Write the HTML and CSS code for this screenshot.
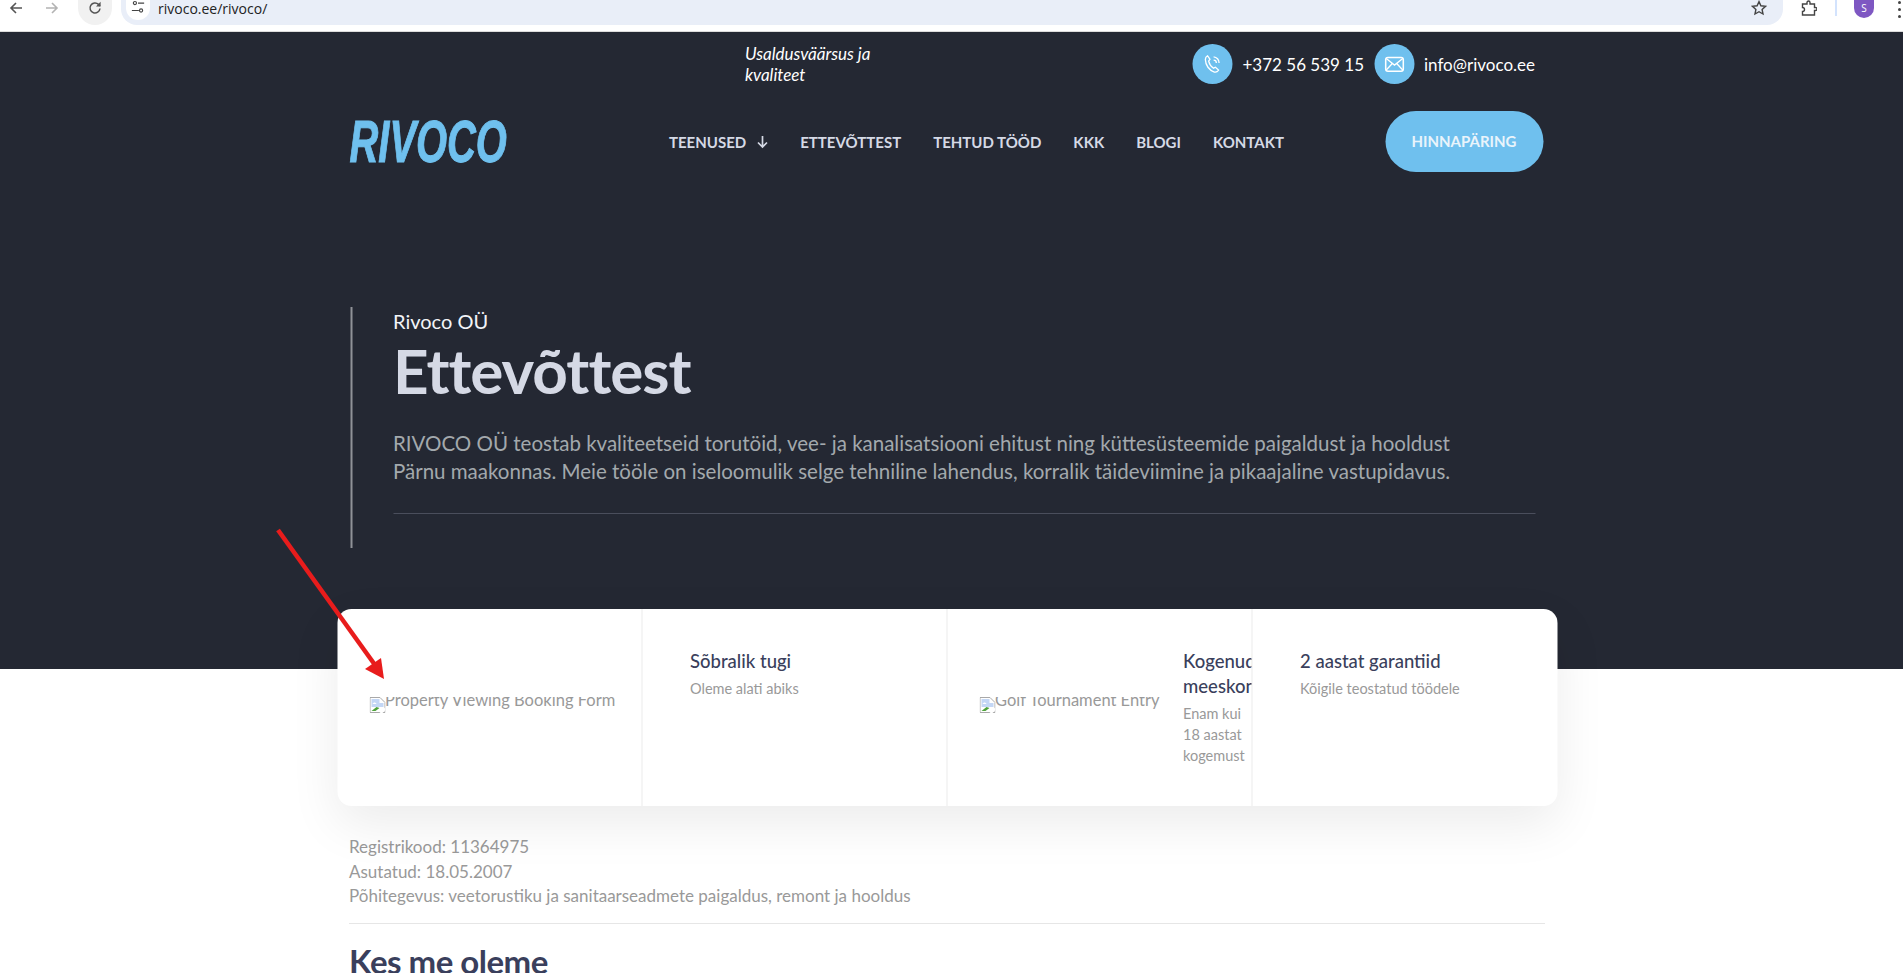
FILE: index.html
```html
<!DOCTYPE html>
<html lang="en">
<head>
    <meta charset="UTF-8">
    <meta name="viewport" content="width=device-width, initial-scale=1.0">
    <title>Ettevõttest - Rivoco</title>
    <link rel="stylesheet" href="styles.css">
</head>
<body>
    <!-- browser toolbar -->
    <div class="toolbar">
        <svg class="tool-icon back" viewBox="0 0 16 16"><path d="M14 8H3M8 3L3 8l5 5" fill="none" stroke="#555" stroke-width="1.6"/></svg>
        <svg class="tool-icon forward" viewBox="0 0 16 16"><path d="M2 8h11M8 3l5 5-5 5" fill="none" stroke="#b3b3b3" stroke-width="1.6"/></svg>
        <div class="reload">
            <svg viewBox="0 0 16 16"><path d="M13 8.5A5 5 0 1 1 11.5 4.4L13 6" fill="none" stroke="#555" stroke-width="1.5"/><path d="M13.6 1.8v4.6H9z" fill="#555"/></svg>
        </div>
        <div class="address">
            <div class="chip">
                <svg viewBox="0 0 16 16"><g fill="none" stroke="#444" stroke-width="1.3"><circle cx="4.5" cy="3.5" r="1.8"/><circle cx="11.5" cy="12" r="1.8"/><path d="M8 3.5h7M1 12h8"/></g></svg>
            </div>
            <span class="url">rivoco.ee/rivoco/</span>
            <svg class="star" viewBox="0 0 16 16"><path d="M8 1.6l1.9 4.2 4.6.5-3.4 3.1.9 4.6L8 11.7 4 14l.9-4.6L1.5 6.3l4.6-.5z" fill="none" stroke="#444" stroke-width="1.4"/></svg>
        </div>
        <svg class="puzzle" viewBox="0 0 16 16"><path d="M1.5 4H6V2.5a1.5 1.5 0 0 1 3 0V4h4.5v3.5h1a1.5 1.5 0 0 1 0 3h-1V15h-12v-3.5a2 2 0 0 0 0-4z" fill="none" stroke="#444" stroke-width="1.4"/></svg>
        <div class="tool-sep"></div>
        <div class="avatar">S</div>
        <div class="menu-dots"><i></i><i></i><i></i></div>
    </div>

    <section class="hero">
        <div class="wrap">
            <div class="topbar">
                <em class="tagline">Usaldusväärsus ja kvaliteet</em>
                <div class="contact">
                    <span class="round-icon">
                        <svg viewBox="0 0 20 20"><path d="M5.5 2.5l2.2 3.2-1.2 1.6c.6 2.6 2.2 5 4.4 6.5l1.8-.9 2.8 2.6c-1 1.6-2.4 2.2-3.8 1.8C7 15.800 3.600 11 3.500 6c0-1.500.7-2.800 2-3.500zM11 3.500a5.500 5.500 0 0 1 5 5.500M11 6.500a2.500 2.500 0 0 1 2.500 2.500" fill="none" stroke="#fff" stroke-width="1.2"/></svg>
                    </span>
                    <span>+372 56 539 15</span>
                </div>
                <div class="contact">
                    <span class="round-icon">
                        <svg viewBox="0 0 20 20"><rect x="2" y="4" width="16" height="12.500" rx="2" fill="none" stroke="#fff" stroke-width="1.400"/><path d="M2.500 5l7.500 6 7.500-6M2.500 15.500l5.500-6M17.500 15.500l-5.500-6" fill="none" stroke="#fff" stroke-width="1.200"/></svg>
                    </span>
                    <span>info@rivoco.ee</span>
                </div>
            </div>
            <div class="mainbar">
                <a class="logo"><span>RIVOCO</span></a>
                <nav class="nav">
                    <a>TEENUSED
                        <svg viewBox="0 0 12 14"><path d="M6 1v11M1.500 7.500L6 12l4.500-4.500" fill="none" stroke="#d5d9e5" stroke-width="1.700"/></svg>
                    </a>
                    <a>ETTEVÕTTEST</a>
                    <a>TEHTUD TÖÖD</a>
                    <a>KKK</a>
                    <a>BLOGI</a>
                    <a>KONTAKT</a>
                </nav>
                <a class="quote-btn">HINNAPÄRING</a>
            </div>
            <div class="intro">
                <div class="intro-sub">Rivoco OÜ</div>
                <h1>Ettevõttest</h1>
                <p>RIVOCO OÜ teostab kvaliteetseid torutöid, vee- ja kanalisatsiooni ehitust ning küttesüsteemide paigaldust ja hooldust<br>Pärnu maakonnas. Meie tööle on iseloomulik selge tehniline lahendus, korralik täideviimine ja pikaajaline vastupidavus.</p>
                <div class="intro-line"></div>
            </div>
        </div>
    </section>

    <div class="features">
        <div class="feature feature-img">
            <div class="broken">
                <svg viewBox="0 0 16 16"><path d="M.5.500h10l5 5v10H.5z" fill="#fff" stroke="#a9a9a9"/><path d="M2 2h8v4h4v4H2z" fill="#c4d7f5"/><path d="M3 7c1-2 3-2 4 0z" fill="#fff"/><path d="M2 14l5-4 3 1-4 3z" fill="#4ea33a"/><path d="M10 16l6-6v3l-3 3z" fill="#fff"/></svg>
                <span>Property Viewing Booking Form</span>
            </div>
        </div>
        <div class="feature feature-text">
            <h3>Sõbralik tugi</h3>
            <p>Oleme alati abiks</p>
        </div>
        <div class="feature feature-golf">
            <div class="broken golf">
                <svg viewBox="0 0 16 16"><path d="M.5.500h10l5 5v10H.5z" fill="#fff" stroke="#a9a9a9"/><path d="M2 2h8v4h4v4H2z" fill="#c4d7f5"/><path d="M3 7c1-2 3-2 4 0z" fill="#fff"/><path d="M2 14l5-4 3 1-4 3z" fill="#4ea33a"/><path d="M10 16l6-6v3l-3 3z" fill="#fff"/></svg>
                <span>Golf Tournament Entry</span>
            </div>
            <div class="clipped-text">
                <h3>Kogenud meeskond</h3>
                <p>Enam kui 18 aastat kogemust</p>
            </div>
        </div>
        <div class="feature feature-text">
            <h3>2 aastat garantiid</h3>
            <p>Kõigile teostatud töödele</p>
        </div>
    </div>

    <div class="company">
        <p>Registrikood: 11364975</p>
        <p>Asutatud: 18.05.2007</p>
        <p>Põhitegevus: veetorustiku ja sanitaarseadmete paigaldus, remont ja hooldus</p>
        <div class="company-line"></div>
        <h2>Kes me oleme</h2>
    </div>

    <!-- red annotation arrow -->
    <svg class="annotation" viewBox="0 0 120 160"><path d="M2 2L99 137" stroke="#e81c1c" stroke-width="4.500" fill="none"/><path d="M108 151L105 130L89 141z" fill="#e81c1c"/></svg>
</body>
</html>
```

FILE: styles.css
```css
html, body {
    height: 973px;
    overflow: hidden;
}
body {
    font-family: Lato, "Open Sans", sans-serif;
    margin: 0;
    padding: 0;
    background: #fff;
    position: relative;
}
p, h1, h2, h3 {
    margin: 0;
}

/* browser toolbar */
.toolbar {
    height: 31px;
    display: flex;
    align-items: flex-start;
    background: #fff;
    border-bottom: 1px solid #dcdcdc;
}
.tool-icon {
    width: 16px;
    height: 16px;
    flex: none;
}
.back { margin: 0 0 0 8px; }
.forward { margin-left: 20px; }
.reload {
    width: 34px;
    height: 25px;
    margin-left: 18px;
    background: #f1f1f1;
    border-radius: 0 0 17px 17px;
    display: flex;
    align-items: flex-start;
    justify-content: center;
    flex: none;
}
.reload svg {
    width: 16px;
    height: 16px;
}
.address {
    width: 1662px;
    height: 25px;
    margin-left: 9px;
    background: #e9eef8;
    border-radius: 0 0 16px 16px;
    display: flex;
    align-items: flex-start;
    font-family: "Open Sans", sans-serif;
    font-size: 14px;
    color: #222;
    flex: none;
}
.chip {
    width: 24px;
    height: 20px;
    margin-left: 5px;
    background: #fff;
    border-radius: 0 0 12px 12px;
    display: flex;
    justify-content: center;
    flex: none;
}
.chip svg {
    width: 14px;
    height: 14px;
}
.url {
    margin-left: 8px;
    line-height: 17px;
}
.star {
    width: 16px;
    height: 16px;
    margin-left: auto;
    margin-right: 16px;
}
.puzzle {
    width: 16px;
    height: 16px;
    margin-left: 18px;
    flex: none;
}
.tool-sep {
    width: 2px;
    height: 16px;
    margin-left: 18px;
    background: #d3e3fd;
    flex: none;
}
.avatar {
    width: 20px;
    height: 18px;
    margin-left: 17px;
    background: #7e57c2;
    border-radius: 0 0 10px 10px;
    color: #fff;
    font-family: "Open Sans", sans-serif;
    font-size: 10px;
    line-height: 16px;
    text-align: center;
    flex: none;
}
.menu-dots {
    margin-left: 24px;
    display: flex;
    flex-direction: column;
    gap: 4px;
    padding-top: 1px;
}
.menu-dots i {
    width: 3px;
    height: 3px;
    background: #444;
    border-radius: 50%;
}

/* dark hero */
.hero {
    height: 637px;
    background: #242833;
}
.wrap {
    width: 1196px;
    margin: 0 auto;
    padding-left: 0;
    transform: translateX(-4.5px);
}
.topbar {
    height: 40px;
    padding-top: 12px;
    display: flex;
    align-items: center;
    color: #fff;
    font-size: 17px;
}
.tagline {
    margin-left: 396px;
    margin-right: 264px;
    font-style: italic;
}
.contact {
    display: flex;
    align-items: center;
    gap: 10px;
    margin-right: 10px;
    white-space: nowrap;
}
.round-icon {
    width: 40px;
    height: 40px;
    border-radius: 50%;
    background: #6fc0ee;
    display: flex;
    align-items: center;
    justify-content: center;
}
.round-icon svg {
    width: 22px;
    height: 22px;
}
.mainbar {
    height: 61px;
    margin-top: 27px;
    display: flex;
    align-items: center;
}
.logo {
    width: 157px;
    flex: none;
    color: #6fc0ee;
    font-family: "Liberation Sans", sans-serif;
    font-size: 60px;
    font-weight: bold;
    font-style: italic;
    line-height: 44px;
}
.logo span {
    display: inline-block;
    transform: scaleX(.665);
    transform-origin: left center;
    -webkit-text-stroke: 1px #6fc0ee;
}
.nav {
    margin-left: 163px;
    display: flex;
    align-items: center;
    gap: 32px;
    font-size: 15px;
    font-weight: 700;
    color: #d5d9e5;
    white-space: nowrap;
}
.nav a {
    display: flex;
    align-items: center;
    gap: 10px;
}
.nav svg {
    width: 12px;
    height: 14px;
}
.quote-btn {
    width: 158px;
    height: 61px;
    margin-left: auto;
    margin-right: 2px;
    border-radius: 31px;
    background: #6fc0ee;
    color: #e9f4fb;
    font-size: 15px;
    font-weight: 700;
    line-height: 61px;
    text-align: center;
}
.intro {
    height: 241px;
    width: 1142px;
    margin: 135px 0 0 1px;
    padding-left: 41px;
    border-left: 2px solid #8f9298;
    position: relative;
    box-sizing: content-box;
}
.intro-sub {
    padding-top: 2px;
    color: #f2f4f8;
    font-size: 20px;
    line-height: 24px;
}
.intro h1 {
    margin-top: 4px;
    color: #d5d9e5;
    font-size: 62px;
    font-weight: 700;
    line-height: 66px;
    letter-spacing: -1px;
}
.intro p {
    margin-top: 26px;
    color: #a3a9ad;
    font-size: 20.500px;
    line-height: 28px;
    white-space: nowrap;
}
.intro-line {
    height: 1px;
    margin-top: 28px;
    background: #4a4e5c;
}

/* white card over the hero edge */
.features {
    width: 1220px;
    height: 197px;
    margin: -60px auto 0;
    transform: translateX(-4.500px);
    position: relative;
    display: grid;
    grid-template-columns: repeat(4, 1fr);
    background: #fff;
    border-radius: 14px;
    box-shadow: 0 18px 50px rgba(0, 0, 0, .08);
    overflow: hidden;
}
.feature {
    overflow: hidden;
    position: relative;
}
.feature h3 {
    color: #3a3f5c;
    font-size: 18.500px;
    font-weight: 500;
    line-height: 25px;
}
.feature p {
    margin-top: 4px;
    color: #999;
    font-size: 14.500px;
    line-height: 21px;
}
.feature-text {
    padding: 40px 0 0 48px;
    border-right: 1px solid #ececec;
    box-sizing: border-box;
}
.feature-text:last-child {
    border-right: 0;
}
.feature-img {
    border-right: 1px solid #ececec;
    box-sizing: border-box;
}
.feature-golf {
    display: flex;
    border-right: 1px solid #ececec;
    box-sizing: border-box;
}
.broken {
    display: flex;
    align-items: flex-start;
    height: 16px;
    margin: 88px 0 0 32px;
    overflow: hidden;
    color: #999;
    font-size: 16.500px;
    line-height: 16px;
    white-space: nowrap;
}
.broken svg {
    width: 16px;
    height: 16px;
    flex: none;
}
.broken span {
    margin-top: -5px;
}
.golf {
    margin-left: 32px;
    width: 187px;
    flex: none;
}
.clipped-text {
    margin-left: 17px;
    padding-top: 40px;
    width: 70px;
    flex: none;
}
.clipped-text h3,
.clipped-text p {
    width: 70px;
}
.clipped-text h3 {
    white-space: normal;
}

/* company facts */
.company {
    width: 1196px;
    margin: 29px 0 0 349px;
    color: #999;
    font-size: 17px;
    line-height: 24.500px;
}
.company-line {
    height: 1px;
    margin-top: 14px;
    background: #e6e6e6;
}
.company h2 {
    margin-top: 17px;
    color: #3a3f5c;
    font-size: 33px;
    font-weight: 700;
    line-height: 40px;
    letter-spacing: -.5px;
}

.annotation {
    position: absolute;
    left: 276px;
    top: 528px;
    width: 120px;
    height: 160px;
}
```
